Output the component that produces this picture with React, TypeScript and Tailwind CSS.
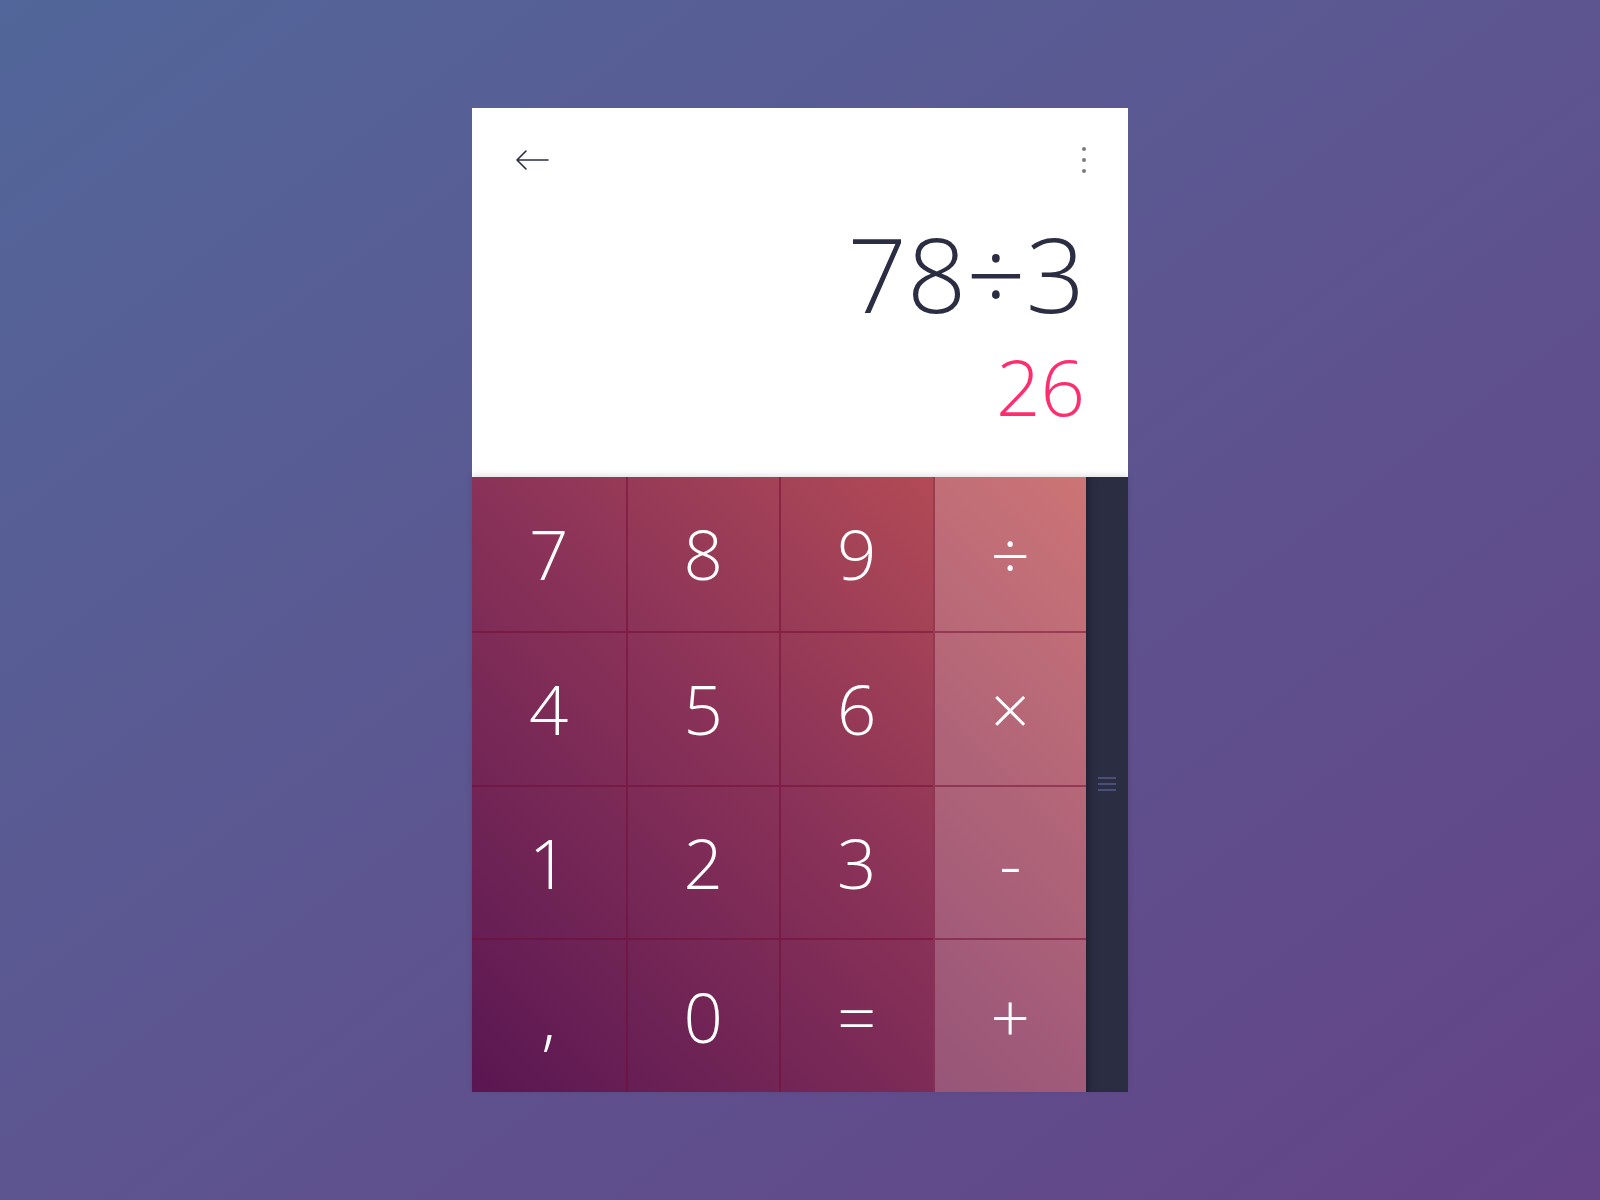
import React from "react";

const keys: { label: string; op?: boolean }[] = [
  { label: "7" }, { label: "8" }, { label: "9" }, { label: "÷", op: true },
  { label: "4" }, { label: "5" }, { label: "6" }, { label: "×", op: true },
  { label: "1" }, { label: "2" }, { label: "3" }, { label: "-", op: true },
  { label: "," }, { label: "0" }, { label: "=" }, { label: "+", op: true },
];

export default function App() {
  return (
    <div
      className="w-full h-screen flex items-center justify-center bg-linear-to-br from-[#51669a] to-[#644386]"
      style={{ fontFamily: '"Open Sans", "Noto Sans", sans-serif' }}
    >
      <div className="w-[656px] h-[984px] flex flex-col">
        {/* display */}
        <div className="h-[369px] bg-white flex flex-col px-[42px]">
          <div className="mt-[40px] h-[24px] flex items-center justify-between">
            <svg width="34" height="22" viewBox="0 0 34 22" fill="none" className="ml-[1px]">
              <path d="M33 11H2M11 2L2 11l9 9" stroke="#2b2d42" strokeWidth="1.6" strokeLinecap="round" strokeLinejoin="round" />
            </svg>
            <div className="flex flex-col items-center gap-[7px]">
              <span className="w-[4px] h-[4px] rounded-full bg-[#7a7a80]" />
              <span className="w-[4px] h-[4px] rounded-full bg-[#7a7a80]" />
              <span className="w-[4px] h-[4px] rounded-full bg-[#7a7a80]" />
            </div>
          </div>
          <div className="mt-[49px] h-[104px] text-right text-[104px] leading-none font-light text-[#2b2d42] pr-[1px]">
            78÷3
          </div>
          <div className="mt-[22px] h-[78px] text-right text-[78px] leading-none font-light text-[#ff2d6e] pr-[1px]">
            26
          </div>
        </div>
        {/* keypad */}
        <div className="flex-1 flex relative shadow-[0_-2px_6px_rgba(0,0,0,0.12)]">
          <div className="w-[614px] grid grid-cols-4 grid-rows-4 bg-linear-to-tr from-[#5a1652] via-[#8a3258] to-[#c05253]">
            {keys.map((k, i) => (
              <div
                key={i}
                className={
                  "flex items-center justify-center text-white text-[69px] font-light leading-none border-[rgba(115,10,50,0.5)] " +
                  (i % 4 !== 0 ? "border-l-2 " : "") +
                  (i >= 4 ? "border-t-2 " : "") +
                  (k.op ? "bg-white/20" : "")
                }
              >
                {k.label}
              </div>
            ))}
          </div>
          <div className="flex-1 bg-[#2b2d43] shadow-[inset_8px_0_8px_-6px_rgba(0,0,0,0.35)] flex items-center justify-center">
            <div className="flex flex-col gap-[4px] mt-[-2px]">
              <span className="w-[18px] h-[2px] bg-[#4b4e77]" />
              <span className="w-[18px] h-[2px] bg-[#4b4e77]" />
              <span className="w-[18px] h-[2px] bg-[#4b4e77]" />
            </div>
          </div>
        </div>
      </div>
    </div>
  );
}
